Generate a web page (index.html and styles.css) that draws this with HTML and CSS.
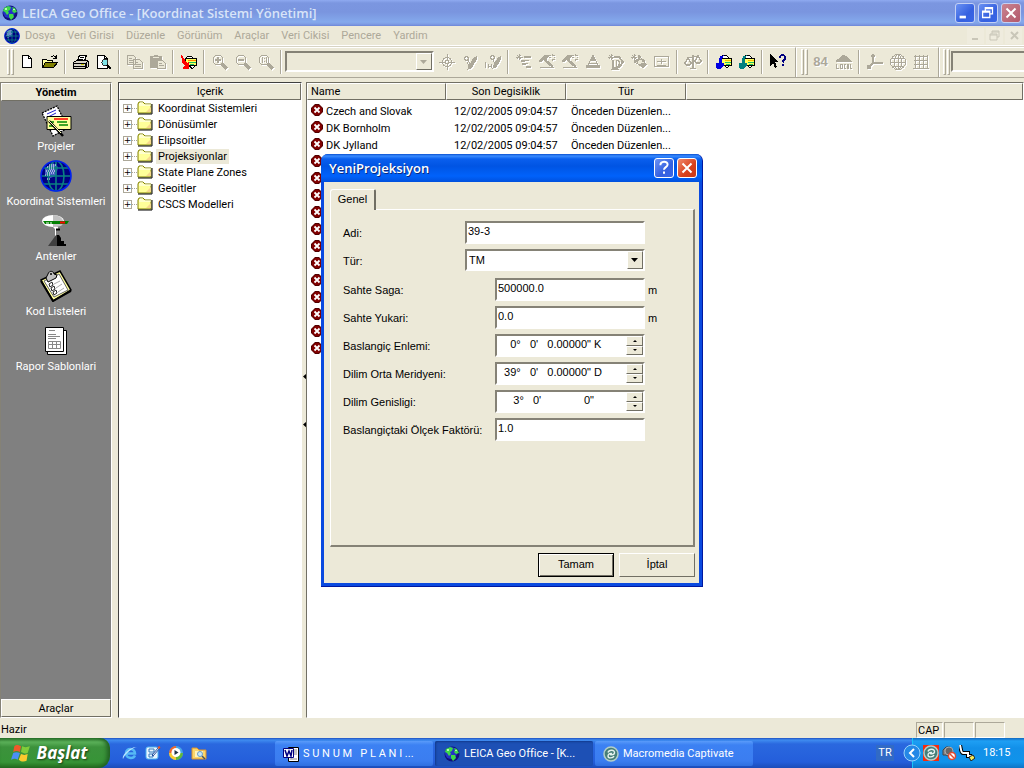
FILE: index.html
```html
<!DOCTYPE html>
<html lang="tr">
<head>
<meta charset="utf-8">
<title>LEICA Geo Office - [Koordinat Sistemi Yönetimi]</title>
<link rel="stylesheet" href="styles.css">
</head>
<body>
<svg class="sprite" aria-hidden="true">
  <symbol id="world" viewBox="0 0 16 16"><circle cx="8" cy="8" r="7.5" fill="#10107c"/><circle cx="7" cy="7" r="6" fill="#2433c4"/><path d="M2 3l4-2 3 1-1 3-2 1 1 2-2 2-2-3-2-1zM10 2l3 1 2 4-3 1-2-2 1-2zM7 9l4 0 1 3-3 3-2-3z" fill="#3dd84a"/><path d="M3 3h2v2H3zM11 4h2v1h-2z" fill="#b5f7b0"/></symbol>
  <symbol id="globe" viewBox="0 0 32 32"><circle cx="16" cy="16" r="15" fill="#000080"/><path d="M5 8l8-5 5 4-2 9-6 2-5-4z" fill="#4560c0"/><g fill="none" stroke="#0a8080" stroke-width="1.6"><path d="M16 1v30M1 16h30M4 8h24M4 24h24"/><ellipse cx="16" cy="16" rx="8" ry="15"/></g><circle cx="16" cy="16" r="15" fill="none" stroke="#0020f0" stroke-width="1.6"/><path d="M9 5h8M7 7h8M9 9h6M6 11h9M7 13h7M5 15h5M7 19h4" stroke="#fff" stroke-dasharray="1 1"/></symbol>
  <symbol id="folder" viewBox="0 0 16 14"><path d="M1 12V3l1-2h4l2 2h6v9z" fill="#ffff99" stroke="#808000"/><path d="M2 4h12M3 3V2h3" stroke="#fff" fill="none"/><path d="M9 11l5-5v5z" fill="#f7d88c"/><path d="M15 3v10H1" stroke="#000" fill="none"/></symbol>
  <symbol id="locked" viewBox="0 0 12 12"><path d="M4 0h4l4 4v4l-4 4H4L0 8V4z" fill="#500000"/><path d="M4 1h4l3 3v4l-3 3H4L1 8V4z" fill="#800000"/><path d="M3.500 3.500l5 5m0-5l-5 5" stroke="#fff" stroke-width="1.800"/></symbol>
  <symbol id="zoom" viewBox="0 0 16 16"><circle cx="6" cy="6" r="5" fill="none" stroke="currentColor"/><path d="M10 10l5 5" stroke="currentColor" stroke-width="3"/></symbol>
  <symbol id="hammer" viewBox="0 0 16 16"><path d="M0 8V6l3-3 3-2h4v2L8 4v2L6 7 4 6 2 8z" fill="currentColor"/><path d="M6 6l8 7" stroke="currentColor" stroke-width="2.500"/><path d="M1 13.500h14M13 0v2m0 3v2M9.500 3.500h2m3 0h2M10.500 1l1 1m4 4l-1-1m1-4l-1 1" stroke="currentColor"/></symbol>
  <symbol id="transfer" viewBox="0 0 16 16"><path d="M5 5V3l3-2h2l3 3v1M6 11h8l-3 3-3-3" fill="#fff" stroke="#000"/><path d="M5.500 4.500h10v7h-10z" fill="#ffff60" stroke="#000"/><path d="M9 6.500h6" stroke="#f8c000"/><path d="M9 8.500h6M10 10.500h4" stroke="#20c060"/><path d="M8 1C2 2 3 5 3 9H0v3l1 3h3l4-4V9H6V5z" fill="currentColor"/></symbol>
  <symbol id="captivate" viewBox="0 0 16 16"><circle cx="8" cy="8" r="7" fill="#467f78" stroke="#b3cec9" stroke-width="1.500"/><path d="M5 6.500c1-3 7-3 6.500.5C11 9 9 9 7 8.500M11 10c-1 2.500-6 2.500-6 0C5 8 7 7 9 7.500" fill="none" stroke="#e5f2ef" stroke-width="1.400"/></symbol>
</svg>

<header class="titlebar">
  <svg class="i16"><use href="#world"/></svg>
  <h1>LEICA Geo Office - [Koordinat Sistemi Yönetimi]</h1>
  <div class="winbtns">
    <button class="wb" aria-label="Minimize"><svg viewBox="0 0 20 20"><path d="M4 13h7v3H4z" fill="#fff"/></svg></button>
    <button class="wb" aria-label="Restore"><svg viewBox="0 0 20 20"><path d="M7 8V4h8v7h-3M7 5h8M4 8h8v7H4zM4 9h8" fill="none" stroke="#fff" stroke-width="1.400"/></svg></button>
    <button class="wb wclose" aria-label="Close"><svg viewBox="0 0 20 20"><path d="M5 5l10 10M15 5L5 15" stroke="#fff" stroke-width="2.200"/></svg></button>
  </div>
</header>

<nav class="menubar">
  <svg class="i16"><use href="#globe"/></svg>
  <button>Dosya</button><button>Veri Girisi</button><button>Düzenle</button><button>Görünüm</button><button>Araçlar</button><button>Veri Cikisi</button><button>Pencere</button><button>Yardim</button>
  <div class="mdi">
    <button aria-label="Minimize child"><svg viewBox="0 0 16 16"><path d="M4 10h6v2H4z" fill="currentColor"/></svg></button>
    <button aria-label="Restore child"><svg viewBox="0 0 16 16"><path d="M5 6V3h7v6h-2M5 4h7M3 6h7v6H3zM3 7h7" fill="none" stroke="currentColor"/></svg></button>
    <button aria-label="Close child"><svg viewBox="0 0 16 16"><path d="M5 4l7 7m0-7l-7 7" stroke="currentColor" stroke-width="2"/></svg></button>
  </div>
</nav>

<div class="toolbars">
  <div class="bar">
    <span class="grip"></span><span class="grip"></span>
    <button class="tb" aria-label="New"><svg viewBox="0 0 16 16"><path d="M3.500 1.500h6l3 3v9h-9z" fill="#fff" stroke="#000"/><path d="M9.500 1.500v3h3" fill="none" stroke="#000"/></svg></button>
    <button class="tb" aria-label="Open"><svg viewBox="0 0 16 16"><path d="M.500 13V5.500h4l1 1h5V9" fill="#ffffa0" stroke="#000"/><path d="M.500 13.500l3-5h12l-4 5z" fill="#808000" stroke="#000"/><path d="M9 3c2-2 4-1 5 1m0-3v3h-3" fill="none" stroke="#000"/></svg></button>
    <span class="sep"></span>
    <button class="tb" aria-label="Print"><svg viewBox="0 0 16 16"><path d="M4.500 7l2-6h7l-2 6z" fill="#fff" stroke="#000"/><path d="M7 3h4M6 5h4" stroke="#000"/><path d="M.500 8.500l3-2h10l2 1v5l-3 2h-12z" fill="#d8d4c8" stroke="#000"/><path d="M1 9h11v5M1 12h11M13 8v6M15 7v6" stroke="#000" fill="none"/><path d="M8 10.500h3" stroke="#cc0"/></svg></button>
    <button class="tb" aria-label="Print preview"><svg viewBox="0 0 16 16"><path d="M1.500 1.500h7l3 3v10h-10z" fill="#fff" stroke="#000"/><path d="M8.500 1.500v3h3" fill="none" stroke="#000"/><circle cx="9" cy="8.500" r="3" fill="#7fe3e8" stroke="#333"/><path d="M11 11l4 4" stroke="#000" stroke-width="2"/></svg></button>
    <span class="sep"></span>
    <button class="tb off" aria-label="Copy"><svg viewBox="0 0 16 16"><path d="M.500 1.500h6l2 2v7h-8zM6.500 5.500h6l3 3v6h-9z" fill="#ece9d8" stroke="currentColor"/><path d="M2 4.500h3M2 6.500h4M2 8.500h4M8 8.500h3M8 10.500h6M8 12.500h6" stroke="currentColor"/></svg></button>
    <button class="tb off" aria-label="Paste"><svg viewBox="0 0 16 16"><path d="M0 2h4V1h4v1h4v5h-5v7H0z" fill="currentColor"/><path d="M3 3.500h6" stroke="#ece9d8"/><path d="M7.500 6.500h5l3 3v5h-8z" fill="#ece9d8" stroke="currentColor"/><path d="M9 9.500h3M9 11.500h5" stroke="currentColor"/></svg></button>
    <span class="sep"></span>
    <button class="tb red" aria-label="Import"><svg viewBox="0 0 16 16"><path d="M4 5l3-3h3l3 3M8 11h7l-4 4-3-4" fill="#fff" stroke="#000"/><path d="M4.500 4.500h11v7h-11z" fill="#ffff60" stroke="#000"/><path d="M7 6.500h8" stroke="#f80"/><path d="M8 8.500h7M9 10.500h4" stroke="#20c060"/><path d="M0 0l2 3 2 3 2 3 2-1v7H2v-2l2-1-3-4z" fill="currentColor"/></svg></button>
    <span class="sep"></span>
    <button class="tb off" aria-label="Zoom in"><svg viewBox="0 0 16 16"><use href="#zoom"/><path d="M6 3v6M3 6h6" stroke="currentColor" stroke-width="2"/></svg></button>
    <button class="tb off" aria-label="Zoom out"><svg viewBox="0 0 16 16"><use href="#zoom"/><path d="M3 6h6" stroke="currentColor" stroke-width="2"/></svg></button>
    <button class="tb off" aria-label="Zoom actual size"><svg viewBox="0 0 16 16"><use href="#zoom"/><path d="M4.500 3v6M6.500 4v1m0 2v1M8.500 3v6" stroke="currentColor"/></svg></button>
    <span class="sep"></span>
    <div class="combo"><select aria-label="Point" disabled><option></option></select><span class="drop"><svg viewBox="0 0 8 4"><path d="M0 0h7L3.500 4z" fill="#aca899"/></svg></span></div>
    <button class="tb off" aria-label="Locate"><svg viewBox="0 0 16 16"><circle cx="8" cy="8" r="4.500" fill="none" stroke="currentColor"/><circle cx="8" cy="8" r="1.800" fill="none" stroke="currentColor"/><path d="M8 0v6m0 4v6M0 8h6m4 0h6" stroke="currentColor"/></svg></button>
    <button class="tb off" aria-label="Edit point"><svg viewBox="0 0 16 16"><path d="M7 12l5-8 2-1v3l-5 8-3 1zM5 8l2 4" fill="currentColor" stroke="currentColor"/><circle cx="4.500" cy="4.500" r="1.800" fill="none" stroke="currentColor" stroke-width="1.500"/><path d="M6 6l2 4" stroke="currentColor"/></svg></button>
    <button class="tb off" aria-label="Edit height"><svg viewBox="0 0 16 16"><path d="M9 11l4-7 2-1v3l-4 7-3 1z" fill="currentColor" stroke="currentColor"/><circle cx="7.500" cy="3.500" r="1.800" fill="none" stroke="currentColor" stroke-width="1.500"/><path d="M8 6l2 4M.500 8v6M3.500 10v4m3-4v4m-3-1.500h3" fill="none" stroke="currentColor"/></svg></button>
    <span class="sep"></span>
    <button class="tb off" aria-label="Baselines"><svg viewBox="0 0 16 16"><path d="M0 3h7M3 0v6M1 1l4 4M5 1L1 5" stroke="currentColor"/><path d="M8 3h7M5 7h4M6 10h4M10 13h5" stroke="currentColor" stroke-width="2"/><path d="M8 6.500h5M7 9.500h5" stroke="currentColor"/></svg></button>
    <button class="tb off" aria-label="Adjust"><svg><use href="#hammer"/></svg></button>
    <button class="tb off" aria-label="Adjust loop"><svg><use href="#hammer"/></svg></button>
    <button class="tb off" aria-label="Triangle"><svg viewBox="0 0 16 16"><path d="M8 1.500L1.500 13.500h13zM4 9h8" fill="none" stroke="currentColor"/><path d="M8 1l3 6H5zM1 11h14v3H1z" fill="currentColor"/></svg></button>
    <button class="tb off" aria-label="Compute"><svg viewBox="0 0 16 16"><path d="M0 3h6M3 0v6M1 1l4 4M5 1L1 5" stroke="currentColor"/><path d="M6 3h5l4 5-4 5-2 1H5V6" fill="none" stroke="currentColor" stroke-width="2"/><path d="M8 6v6h2l2-3-2-3zM3 15h8M12 13l3-4" fill="none" stroke="currentColor"/></svg></button>
    <button class="tb off" aria-label="Compute network"><svg viewBox="0 0 16 16"><path d="M0 3h6M3 0v6M1 1l4 4M5 1L1 5" stroke="currentColor"/><path d="M7 1l3 1 1 3 3 1v3l2 1-2 3-2 1-3-1-2-3-4-1V6l4-1z" fill="currentColor"/><circle cx="9" cy="8" r="2" fill="#ece9d8"/><path d="M9 4v1M5 8h1m5 0h2M8 12h2" stroke="#ece9d8"/></svg></button>
    <button class="tb off" aria-label="Report"><svg viewBox="0 0 16 16"><path d="M.500 2.500h14v10H.500zM3 7.500h9M7.500 5v5M3 11.500h9" fill="none" stroke="currentColor"/></svg></button>
    <span class="sep"></span>
    <button class="tb off" aria-label="Compare"><svg viewBox="0 0 16 16"><path d="M8 1v13M5 14.500h6M3 4l10-2M0 9l3-5 3 5c-1 3-5 3-6 0zM10 7l3-5 3 5c-1 3-5 3-6 0z" fill="none" stroke="currentColor" stroke-width="1.500"/></svg></button>
    <span class="sep"></span>
    <button class="tb blue" aria-label="Receive"><svg><use href="#transfer"/></svg></button>
    <button class="tb teal" aria-label="Send"><svg><use href="#transfer"/></svg></button>
    <span class="sep"></span>
    <button class="tb" aria-label="Context help"><svg viewBox="0 0 16 16"><path d="M0 0v12l3-3 2 5 2-1-2-5h4z" fill="#000"/><path d="M10 4c0-4 5-4 5 0 0 2-2 2-2.500 4.500m0 1.500v2" fill="none" stroke="#000080" stroke-width="2"/></svg></button>
  </div>
  <div class="bar bar2">
    <span class="grip"></span><span class="grip"></span>
    <button class="tb off txt">84</button>
    <button class="tb off" aria-label="Local"><svg viewBox="0 0 16 16"><path d="M2 5l5-4 3 1 4 4 2 2H0V6zM1 8l3-2h8z" fill="currentColor"/><path d="M.500 10v4.500H3M4.500 10.500h2v4h-2zM10 10.500H8.500v4H10M11.500 15v-4.500h1V15m1.500-5v4.500h2" fill="none" stroke="currentColor"/></svg></button>
    <span class="sep"></span>
    <button class="tb off" aria-label="Axes"><svg viewBox="0 0 16 16"><path d="M6 1v8l-5 5M6 9h10M4 3l2-2 2 2M1 11v3h3" fill="none" stroke="currentColor" stroke-width="1.500"/></svg></button>
    <button class="tb off" aria-label="Geodetic"><svg viewBox="0 0 16 16"><g fill="none" stroke="currentColor"><circle cx="8" cy="8" r="7.500"/><ellipse cx="8" cy="8" rx="3.500" ry="7.500"/><path d="M8 0v16M0 8h16M2 4h12M2 12h12"/></g></svg></button>
    <button class="tb off" aria-label="Grid"><svg viewBox="0 0 16 16"><path d="M1 2.500h14M1 6.500h14M1 10.500h14M0 14.500h16M2.500 1v14M6.500 1v14M10.500 1v14M14.500 1v14" stroke="currentColor"/></svg></button>
  </div>
  <div class="bar bar3">
    <span class="grip"></span><span class="grip"></span>
    <div class="combo wide"><select aria-label="Coordinate system" disabled><option></option></select></div>
  </div>
</div>

<main class="work">
  <aside class="side">
    <button class="sidehead"><b>Yönetim</b></button>
    <div class="sidebody">
      <button class="navi"><svg viewBox="0 0 32 32"><path d="M2 8L17 1l11 22-15 8z" fill="#fff" stroke="#000" stroke-width="1.300" stroke-dasharray="2 1"/><path d="M7 9l9-4M8 12l8-4" stroke="#22c"/><path d="M7 11.500h24v13H7z" fill="#ffff9c" stroke="#000"/><path d="M14 14h14" stroke="#f00" stroke-width="1.500"/><path d="M10 17h4m3 0h10M19 20h9M9 21h5" stroke="#080" stroke-width="1.500"/><path d="M9 16l14 15" stroke="#000" stroke-width="2.500"/><path d="M9 16l12 12" stroke="#ffb"/></svg><span>Projeler</span></button>
      <button class="navi"><svg><use href="#globe"/></svg><span>Koordinat Sistemleri</span></button>
      <button class="navi"><svg viewBox="0 0 32 32"><ellipse cx="13" cy="6" rx="11" ry="6" fill="#fff"/><path d="M13 0c9 0 13 7 8 11l-8 1z" fill="#c0c0c0"/><path d="M3 6h26l-2 3H5z" fill="#008000"/><path d="M6 8h3m1 0h2" stroke="#fff"/><path d="M20 7.500h5" stroke="#f00" stroke-width="2"/><path d="M13 12h5v2h-2v8h-1v-8z" fill="#fff"/><path d="M16 14.500h4" stroke="#000" stroke-width="2"/><path d="M17 20v11h9v-2h-2v-3h-3v-3l-2-3z" fill="#000"/><path d="M16 20L8 31h9V20z" fill="#404040"/></svg><span>Antenler</span></button>
      <button class="navi"><svg viewBox="0 0 32 32"><path d="M1 10L20 1l11 19-18 11z" fill="#ffff9c" stroke="#000" stroke-width="1.500"/><path d="M4 11l15-7 9 16-14 7z" fill="#fff" stroke="#666"/><path d="M1 11l12 20 18-10" fill="none" stroke="#000" stroke-width="2"/><path d="M6 8l2-4c1-4 6-3 6 0l3 1-1 3-8 4z" fill="#c0c0c0" stroke="#000"/><circle cx="11" cy="4" r="1" fill="#000"/><path d="M14 14l6-3m-4 7l6-4m-4 8l6-4" stroke="#aaa"/><path d="M9 14l3-2 1 3-3 2zM11 18l3-2 1 3-3 2zM13 22l3-2 1 3-3 2z" fill="none" stroke="#222"/></svg><span>Kod Listeleri</span></button>
      <button class="navi"><svg viewBox="0 0 32 32"><path d="M7.500 5.500h19v24h-19z" fill="#fff" stroke="#000"/><path d="M5.500 2.500h18v24h-18z" fill="#fff" stroke="#000"/><path d="M9 5.500h6M8 9.500h8M8 11.500h12M8 13.500h8" stroke="#888"/><path d="M8.500 16.500h12v7h-12zM12.500 16v7m4-7v7M8 19.500h13" fill="none" stroke="#888"/></svg><span>Rapor Sablonlari</span></button>
    </div>
    <button class="sidehead">Araçlar</button>
  </aside>

  <section class="tree">
    <div class="colhead">Içerik</div>
    <ul>
      <li><button aria-label="Expand">+</button><svg><use href="#folder"/></svg><span>Koordinat Sistemleri</span></li>
      <li><button aria-label="Expand">+</button><svg><use href="#folder"/></svg><span>Dönüsümler</span></li>
      <li><button aria-label="Expand">+</button><svg><use href="#folder"/></svg><span>Elipsoitler</span></li>
      <li><button aria-label="Expand">+</button><svg><use href="#folder"/></svg><span class="sel">Projeksiyonlar</span></li>
      <li><button aria-label="Expand">+</button><svg><use href="#folder"/></svg><span>State Plane Zones</span></li>
      <li><button aria-label="Expand">+</button><svg><use href="#folder"/></svg><span>Geoitler</span></li>
      <li><button aria-label="Expand">+</button><svg><use href="#folder"/></svg><span>CSCS Modelleri</span></li>
    </ul>
  </section>

  <div class="splitter"><svg viewBox="0 0 4 7"><path d="M4 0v7L0 3.500z"/></svg><svg viewBox="0 0 4 7"><path d="M4 0v7L0 3.500z"/></svg></div>

  <section class="list">
    <table>
      <colgroup><col class="c1"><col class="c2"><col class="c3"><col></colgroup>
      <thead><tr><th class="l">Name</th><th>Son Degisiklik</th><th>Tür</th><th></th></tr></thead>
      <tbody>
        <tr class="pad"><td></td></tr>
        <tr><td><svg><use href="#locked"/></svg>Czech and Slovak</td><td class="d">12/02/2005 09:04:57</td><td>Önceden Düzenlen...</td><td></td></tr>
        <tr><td><svg><use href="#locked"/></svg>DK Bornholm</td><td class="d">12/02/2005 09:04:57</td><td>Önceden Düzenlen...</td><td></td></tr>
        <tr><td><svg><use href="#locked"/></svg>DK Jylland</td><td class="d">12/02/2005 09:04:57</td><td>Önceden Düzenlen...</td><td></td></tr>
        <tr><td><svg><use href="#locked"/></svg></td></tr>
        <tr><td><svg><use href="#locked"/></svg></td></tr>
        <tr><td><svg><use href="#locked"/></svg></td></tr>
        <tr><td><svg><use href="#locked"/></svg></td></tr>
        <tr><td><svg><use href="#locked"/></svg></td></tr>
        <tr><td><svg><use href="#locked"/></svg></td></tr>
        <tr><td><svg><use href="#locked"/></svg></td></tr>
        <tr><td><svg><use href="#locked"/></svg></td></tr>
        <tr><td><svg><use href="#locked"/></svg></td></tr>
        <tr><td><svg><use href="#locked"/></svg></td></tr>
        <tr><td><svg><use href="#locked"/></svg></td></tr>
        <tr><td><svg><use href="#locked"/></svg></td></tr>
      </tbody>
    </table>
  </section>
</main>

<div class="status"><span class="msg">Hazir</span><span class="cell">CAP</span><span class="cell"></span><span class="cell"></span></div>

<footer class="taskbar">
  <button class="start"><svg viewBox="0 0 18 18"><path d="M3 3c2-2 4-1 6 0L8 8C6 7 4 7 2 8z" fill="#f0592a"/><path d="M10 3c2 1 4 1 7 0l-2 6c-2 1-4 0-6-1z" fill="#7fcc3a"/><path d="M2 9c2-1 4-1 6 0l-2 6c-2-1-3-1-6 0z" fill="#4b8ff5"/><path d="M9 10c2 1 4 1 6 0l-1 6c-2 1-5 1-7-1z" fill="#fbc92e"/></svg>Başlat</button>
  <div class="quick">
    <button aria-label="Internet Explorer"><svg viewBox="0 0 16 16"><path d="M13 10.500c-2 4-9 3-9-2.500s9-5.500 9 .5H5" fill="none" stroke="#55b9f5" stroke-width="2.500"/><path d="M1 14c-2-4 8-13 14-12-4 0-12 7-14 12z" fill="#b8e3ff"/></svg></button>
    <button aria-label="Show desktop"><svg viewBox="0 0 16 16"><rect x="1" y="2" width="12" height="12" rx="2" fill="#e9f5ff" stroke="#4cb0ef"/><path d="M4 4h5v3H4zM4 9h4v3H4z" fill="none" stroke="#357abd"/><path d="M7 10L14 2l1 1-7 8z" fill="#fff" stroke="#224c9c"/><path d="M13 3l2-1" stroke="#e52" stroke-width="2"/></svg></button>
    <button aria-label="Media Player"><svg viewBox="0 0 16 16"><circle cx="8" cy="8" r="7" fill="#46a5e8"/><path d="M8 8V1a7 7 0 0 0-7 7z" fill="#f1682c"/><path d="M8 8H1a7 7 0 0 0 7 7z" fill="#f7c931"/><path d="M8 8v7a7 7 0 0 0 7-7z" fill="#62b73a"/><circle cx="8" cy="7.500" r="4.500" fill="#fff"/><path d="M6.500 5v5l4-2.500z" fill="#234"/></svg></button>
    <button aria-label="Explorer"><svg viewBox="0 0 16 16"><path d="M1 3h5l2 2h7v9H1z" fill="#fbd66b" stroke="#d8912e"/><path d="M4 6h8v6H4z" fill="#fff3bd"/><circle cx="9" cy="9" r="2.500" fill="#c5e9ff" stroke="#6a9cc4"/><path d="M11 11l3 3" stroke="#456" stroke-width="1.500"/></svg></button>
  </div>
  <button class="task"><svg viewBox="0 0 16 16"><path d="M5.500 1.500h10v14h-10z" fill="#fff" stroke="#000"/><path d="M11 4h3M11 6h3M11 8h3M7 13h7" stroke="#888"/><path d="M.500 2.500h10v9H.500z" fill="#fff" stroke="#000080"/><path d="M2 4l2 6 2-5 2 5 1-6" fill="none" stroke="#000080" stroke-width="1.500"/></svg><span>S U N U M &nbsp; P L A N I ...</span></button>
  <button class="task active"><svg><use href="#world"/></svg><span>LEICA Geo Office - [K...</span></button>
  <button class="task"><svg><use href="#captivate"/></svg><span>Macromedia Captivate</span></button>
  <button class="lang">TR</button>
  <div class="tray">
    <button class="chev" aria-label="Show hidden icons"><svg viewBox="0 0 18 18"><circle cx="9" cy="9" r="8" fill="#2488e6" stroke="#9bd2fa"/><path d="M11 5L7 9l4 4" fill="none" stroke="#fff" stroke-width="2"/></svg></button>
    <svg class="cap"><use href="#captivate"/></svg>
    <svg viewBox="0 0 16 16"><path d="M2 5l3-3 4 0v10l-4-2-3 0z" fill="#8b8b8b" stroke="#444"/><circle cx="8" cy="6" r="4" fill="#666" stroke="#aaa"/><circle cx="11" cy="11" r="3.500" fill="#fff" stroke="#e2492f" stroke-width="1.500"/><path d="M9 9l4 4" stroke="#e2492f" stroke-width="1.500"/></svg>
    <svg viewBox="0 0 16 16"><path d="M1 0c1 4 1 8 3 8h5v3h4" fill="none" stroke="#000" stroke-width="4"/><path d="M1 0c1 4 1 8 3 8h5v3h4" fill="none" stroke="#fff" stroke-width="2"/><path d="M10 12l4-2 2 3-4 3z" fill="#f5ec58" stroke="#222"/></svg>
    <time>18:15</time>
  </div>
</footer>

<div class="dialog" role="dialog" aria-labelledby="dlgt">
  <div class="dtitle"><h2 id="dlgt">YeniProjeksiyon</h2>
    <button class="wb" aria-label="Help"><svg viewBox="0 0 20 20"><path d="M6 7c0-5 8-5 8-1 0 3-4 3-4 6m0 2v2.500" fill="none" stroke="#fff" stroke-width="2.200"/></svg></button>
    <button class="wb wclose" aria-label="Close dialog"><svg viewBox="0 0 20 20"><path d="M5 5l10 10M15 5L5 15" stroke="#fff" stroke-width="2.200"/></svg></button>
  </div>
  <div class="dbody">
    <div class="tabs"><button class="tab" role="tab" aria-selected="true">Genel</button></div>
    <form class="page">
      <div class="row"><label for="f1">Adi:</label><input id="f1" class="big" value="39-3"></div>
      <div class="row typerow"><label for="f2">Tür:</label><div class="combo big"><select id="f2"><option>TM</option></select><span class="drop"><svg viewBox="0 0 8 4"><path d="M0 0h7L3.500 4z"/></svg></span></div></div>
      <div class="row"><label for="f3">Sahte Saga:</label><input id="f3" value="500000.0"><span class="unit">m</span></div>
      <div class="row"><label for="f4">Sahte Yukari:</label><input id="f4" value="0.0"><span class="unit">m</span></div>
      <div class="row"><label for="f5">Baslangiç Enlemi:</label><div class="spin"><input id="f5" value="    0°   0'   0.00000&quot; K"><div><button type="button" aria-label="Increase"><svg viewBox="0 0 4 2"><path d="M0 2h4L2 0z"/></svg></button><button type="button" aria-label="Decrease"><svg viewBox="0 0 4 2"><path d="M0 0h4L2 2z"/></svg></button></div></div></div>
      <div class="row"><label for="f6">Dilim Orta Meridyeni:</label><div class="spin"><input id="f6" value="  39°   0'   0.00000&quot; D"><div><button type="button" aria-label="Increase"><svg viewBox="0 0 4 2"><path d="M0 2h4L2 0z"/></svg></button><button type="button" aria-label="Decrease"><svg viewBox="0 0 4 2"><path d="M0 0h4L2 2z"/></svg></button></div></div></div>
      <div class="row"><label for="f7">Dilim Genisligi:</label><div class="spin"><input id="f7" value="     3°   0'              0&quot;"><div><button type="button" aria-label="Increase"><svg viewBox="0 0 4 2"><path d="M0 2h4L2 0z"/></svg></button><button type="button" aria-label="Decrease"><svg viewBox="0 0 4 2"><path d="M0 0h4L2 2z"/></svg></button></div></div></div>
      <div class="row"><label for="f8">Baslangiçtaki Ölçek Faktörü:</label><input id="f8" value="1.0"></div>
    </form>
    <div class="actions"><button class="btn default">Tamam</button><button class="btn">İptal</button></div>
  </div>
</div>
</body>
</html>
```
FILE: styles.css
```css
* { box-sizing: border-box; }
body { margin: 0; height: 100vh; display: flex; flex-direction: column; overflow: hidden; background: #ece9d8; color: #000; font: 11px/16px Roboto, "Open Sans", sans-serif; position: relative; }
button, input, select { font: inherit; color: inherit; margin: 0; padding: 0; border: 0; background: none; border-radius: 0; outline: none; }
button { display: flex; align-items: center; justify-content: center; }
svg { display: block; flex: none; }
h1, h2, ul { margin: 0; padding: 0; }
.sprite { position: absolute; width: 0; height: 0; }
.i16 { width: 16px; height: 16px; }

.titlebar { height: 26px; flex: none; display: flex; align-items: center; gap: 4px; padding: 0 3px 0 2px; background: linear-gradient(#8faaf0 0, #7b96e0 3px, #7a95df 12px, #84a9ec 22px, #7f9de4 24px, #6c86d8); }
.titlebar h1 { font: 600 13px/20px "Open Sans", sans-serif; color: #d8e4f8; }
.winbtns { margin-left: auto; display: flex; gap: 3px; }
.wb { width: 20px; height: 20px; border: 1px solid #c3d0f5; border-radius: 3px; background: linear-gradient(135deg, #6b92f3, #3560e0 60%, #3a66e6); }
.wb svg { width: 18px; height: 18px; }
.wb.wclose { background: linear-gradient(135deg, #c98492, #b3586a); }

.menubar { height: 20px; flex: none; display: flex; align-items: center; gap: 12px; padding: 0 2px 0 4px; color: #aca899; border-bottom: 1px solid #fff; }
.menubar > svg { margin-right: -7px; }
.mdi { margin-left: auto; display: flex; gap: 2px; }
.mdi button { width: 17px; height: 16px; background: #efecde; color: #c9c6b8; }
.mdi svg { width: 16px; height: 16px; }

.toolbars { height: 32px; flex: none; display: flex; border-top: 1px solid #d8d4c4; border-bottom: 1px solid #aca899; }
.bar { display: flex; align-items: center; flex: 0 0 796px; padding: 0 0 2px 7px; border-top: 1px solid #fff; border-right: 1px solid #aca899; }
.bar2 { flex-basis: 143px; padding-left: 4px; border-left: 1px solid #fff; }
.bar3 { flex: 1 1 0; min-width: 0; padding-left: 3px; border-right: 0; border-left: 1px solid #fff; }
.grip { width: 3px; height: 26px; margin-right: 1px; border: 1px solid; border-color: #fff #aca899 #aca899 #fff; flex: none; }
.tb { width: 23px; height: 24px; flex: none; }
.tb svg { width: 16px; height: 16px; overflow: visible; shape-rendering: crispEdges; }
.off { color: #aca899; }
.off svg { filter: drop-shadow(1px 1px 0 #fff); }
.txt { font: bold 13px "Liberation Sans Narrow", "Liberation Sans", sans-serif; text-shadow: 1px 1px #fff; }
.red { color: #f00; }
.blue { color: #0000e0; }
.teal { color: #008080; }
.sep { width: 2px; height: 24px; margin: 0 3px; border-left: 1px solid #aca899; border-right: 1px solid #fff; flex: none; }
.combo { display: flex; position: relative; width: 149px; height: 21px; flex: none; border: 2px solid; border-color: #858276 #fff #fff #858276; margin-right: 1px; }
.combo select { flex: 1; min-width: 0; appearance: none; padding-left: 2px; opacity: 1; }
.drop { position: absolute; right: 0; top: 0; bottom: 0; width: 16px; display: flex; align-items: center; justify-content: center; background: #ece9d8; border: 1px solid; border-color: #fff #716f64 #716f64 #fff; pointer-events: none; }
.drop svg { width: 8px; height: 4px; }
.combo.wide { flex: 1; min-width: 0; margin: 0; border-right: 0; }

.work { flex: 1; min-height: 0; display: flex; padding-top: 4px; }
.side { width: 112px; flex: none; display: flex; flex-direction: column; border: 1px solid; border-color: #858276 #fff #fff #858276; background: #808080; }
.sidehead { height: 18px; flex: none; padding-top: 2px; background: #ece9d8; border: 1px solid; border-color: #fff #716f64 #716f64 #fff; }
.sidebody { flex: 1; display: flex; flex-direction: column; gap: 5px; padding-top: 4px; color: #fff; }
.navi { flex-direction: column; height: 50px; white-space: nowrap; gap: 2px; }
.navi svg { width: 32px; height: 32px; }
.tree { width: 184px; flex: none; margin-left: 6px; background: #fff; border: 1px solid; border-color: #404040 #fff #fff #404040; }
.colhead { height: 17px; text-align: center; background: #ece9d8; border: 1px solid; border-color: #fff #716f64 #716f64 #fff; }
.tree ul { list-style: none; padding-left: 4px; }
.tree li { display: flex; align-items: center; height: 16px; }
.tree li button { width: 9px; height: 9px; border: 1px solid #aca899; background: #fff; font: 9px/7px "DejaVu Sans", sans-serif; }
.tree li::before { content: ""; order: 1; width: 5px; border-top: 1px dotted #aca899; }
.tree li svg { order: 2; width: 16px; height: 14px; }
.tree li span { order: 3; margin-left: 3px; padding: 0 2px; line-height: 15px; }
.tree .sel { background: #ece9d8; }
.splitter { width: 4px; flex: none; display: flex; flex-direction: column; align-items: flex-end; gap: 41px; padding-top: 291px; }
.splitter svg { width: 3px; height: 7px; }
.list { flex: 1; min-width: 0; background: #fff; border: 1px solid; border-color: #716f64 #fff #fff #716f64; }
.list table { width: 100%; table-layout: fixed; border-collapse: separate; border-spacing: 0; }
.c1 { width: 139px; } .c2 { width: 120px; } .c3 { width: 120px; }
th { height: 17px; padding: 0; line-height: 14px; font-weight: normal; background: #ece9d8; border: 1px solid; border-color: #fff #716f64 #716f64 #fff; }
th.l { text-align: left; padding-left: 3px; }
td { height: 17px; padding: 0 0 0 5px; line-height: 17px; white-space: nowrap; }
td:first-child { padding-left: 4px; }
td svg { display: inline-block; vertical-align: -1px; width: 12px; height: 12px; margin-right: 3px; }
td.d { padding-left: 8px; }
.list .pad td { height: 3px; line-height: 0; }

.status { height: 20px; flex: none; display: flex; gap: 1px; padding: 4px 19px 0 1px; }
.msg { flex: 1; }
.cell { width: 30px; padding-left: 1px; border: 1px solid; border-color: #aca899 #fff #fff #aca899; line-height: 15px; }
.cell:nth-child(2) { width: 27px; }

.taskbar { height: 30px; flex: none; display: flex; align-items: stretch; color: #fff; background: linear-gradient(#1f50c0 0, #3f8cf0 2px, #2a68df 6px, #245edb 24px, #1c4cb8); }
.start { width: 110px; gap: 6px; padding-right: 12px; font: italic bold 17px/22px "Open Sans", sans-serif; text-shadow: 1px 1px 2px #1a3d12; border-radius: 0 10px 12px 0; background: linear-gradient(#2d7a2d, #5cb15a 4px, #3c923c 9px, #379437 24px, #25701f); box-shadow: inset -3px 0 4px #205f22; }
.start svg { width: 20px; height: 20px; }
.quick { display: flex; gap: 7px; padding-left: 12px; width: 165px; }
.quick svg { width: 16px; height: 16px; }
.task { width: 158px; height: 25px; margin: 3px 2px 0 0; justify-content: flex-start; gap: 4px; padding-left: 8px; white-space: nowrap; border-radius: 2px; background: linear-gradient(#5a9bfa, #3c81f3 4px, #3b7df0 20px, #3070e0); }
.task.active { background: #1d50b5; box-shadow: inset 1px 1px 2px #123a8c; padding-left: 9px; }
.task svg { width: 16px; height: 16px; }
.lang { margin: 7px 18px 7px auto; width: 18px; background: #316ac5; }
.tray { width: 112px; display: flex; align-items: center; gap: 2px; background: linear-gradient(#1268c0, #1e9ff4 3px, #1290e9 10px, #1093ea 24px, #0e74c5); border-left: 1px solid #16c6f8; }
.tray svg { width: 16px; height: 16px; }
.chev { margin-left: -10px; }
.chev svg { width: 18px; height: 18px; }
.tray .cap { background: #f52a0c; }
.tray time { margin-left: 6px; }

.dialog { position: absolute; left: 321px; top: 154px; width: 382px; font-family: "Liberation Sans", Arial, sans-serif; background: #0a4ae0; border-radius: 7px 7px 0 0; padding: 0 3px 3px; border-right: 1px solid #0018a0; border-bottom: 1px solid #0018a0; }
.dtitle { display: flex; align-items: center; gap: 3px; height: 28px; padding: 0 2px 0 4px; margin: 0 -3px; border-radius: 7px 7px 0 0; background: linear-gradient(#0a50d0 0, #3a8cff 2px, #0a5fee 5px, #0054e3 12px, #0062fb 22px, #0050dd 28px); }
.dtitle h2 { flex: 1; padding-left: 4px; font: 600 13px/20px "Open Sans", sans-serif; color: #fff; text-shadow: 1px 1px #0a2a80; }
.dtitle .wb { border-color: #fff; }
.dtitle .wb:last-child { margin-right: 3px; }
.dtitle .wclose { background: linear-gradient(135deg, #f0896c, #d8401c 60%, #c93a18); }
.dbody { background: #ece9d8; padding: 7px 4px 6px 6px; }
.tabs { display: flex; height: 20px; }
.tab { width: 46px; height: 21px; padding-bottom: 2px; position: relative; background: #ece9d8; border: 1px solid #fff; border-bottom: 0; border-right: 2px solid #716f64; border-radius: 3px 2px 0 0; }
.page { height: 338px; padding: 11px 0 0 12px; border: 1px solid #fff; border-right: 2px solid #858276; border-bottom: 2px solid #858276; }
.row { display: flex; height: 23px; margin-bottom: 5px; }
.typerow { margin-bottom: 6px; }
.row label { flex: 1; line-height: 24px; }
.row input, .spin { width: 150px; height: 23px; background: #fff; border: 2px solid; border-color: #858276 #fff #fff #858276; padding: 0 1px 3px; margin-right: 48px; }
.row .big { width: 180px; }
.row .combo { height: 22px; margin-right: 48px; background: #fff; }
.row .unit { width: 45px; margin: 0 0 0 -45px; line-height: 25px; }
.row .spin { display: flex; padding: 0; }
.row .spin input { flex: 1; width: auto; min-width: 0; height: 19px; border: 0; margin: 0; }
.spin div { width: 17px; display: flex; flex-direction: column; }
.spin button { flex: 1; background: #ece9d8; border: 1px solid; border-color: #fff #716f64 #716f64 #fff; }
.spin svg { width: 4px; height: 2px; }
.actions { display: flex; justify-content: flex-end; gap: 5px; padding-top: 6px; }
.btn { width: 76px; height: 24px; padding-bottom: 2px; border: 1px solid; border-color: #fff #716f64 #716f64 #fff; }
.btn.default { border-color: #000; box-shadow: inset 1px 1px #fff, inset -1px -1px #716f64; }
```
